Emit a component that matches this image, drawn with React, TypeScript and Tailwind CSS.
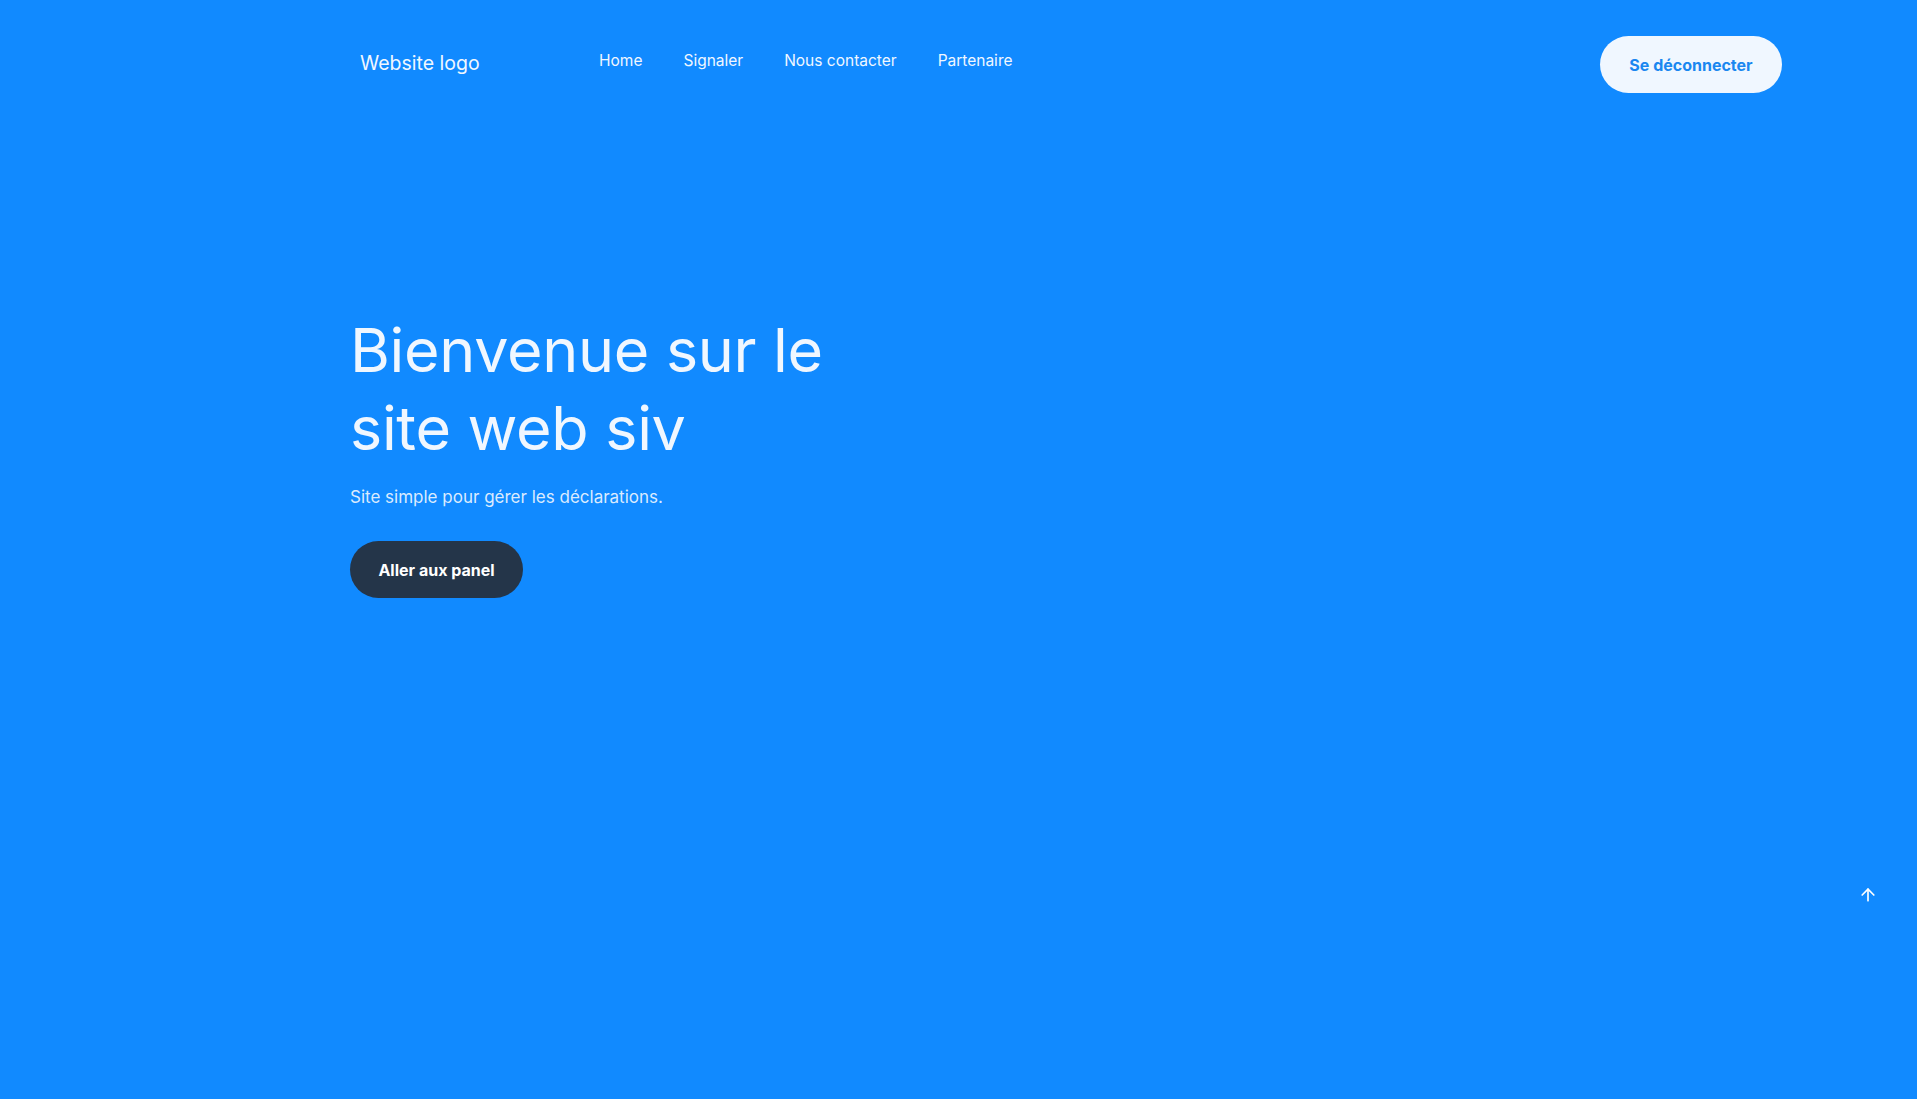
import React from "react";
import { ArrowUp } from "lucide-react";

export default function App() {
  return (
    <div className="relative min-h-[1099px] w-full bg-[#118aff] text-white" style={{ fontFamily: "Inter, 'Noto Sans', sans-serif" }}>
      <header className="flex items-start pl-[350px] pr-[135px] pt-[36px]">
        <div className="w-[249px] pl-[10px] pt-[15px] text-[19.5px] leading-[24px] text-[#f0f7ff]">Website logo</div>
        <nav className="flex gap-[41px] pt-[15px] text-[15.5px] leading-[20px] text-[#f0f7ff]">
          <a>Home</a>
          <a>Signaler</a>
          <a>Nous contacter</a>
          <a>Partenaire</a>
        </nav>
        <div className="flex-1" />
        <button className="h-[57px] w-[182px] rounded-full bg-[#f0f7ff] text-[16px] font-bold text-[#1a87f0]">Se déconnecter</button>
      </header>

      <main className="pl-[350px] pt-[218px]">
        <h1 className="max-w-[560px] text-[61px] font-normal leading-[78px] tracking-[-0.3px] text-[#f0f7ff]">
          Bienvenue sur le<br />site web siv
        </h1>
        <p className="mt-[18px] text-[17px] leading-[24px] text-[#dbeafe]">Site simple pour gérer les déclarations.</p>
        <button className="mt-[32px] h-[57px] w-[173px] rounded-full bg-[#243549] text-[16px] font-bold text-white">Aller aux panel</button>
      </main>

      <div className="absolute left-[1858px] top-[885px] text-white">
        <ArrowUp size={20} strokeWidth={2} />
      </div>
    </div>
  );
}
